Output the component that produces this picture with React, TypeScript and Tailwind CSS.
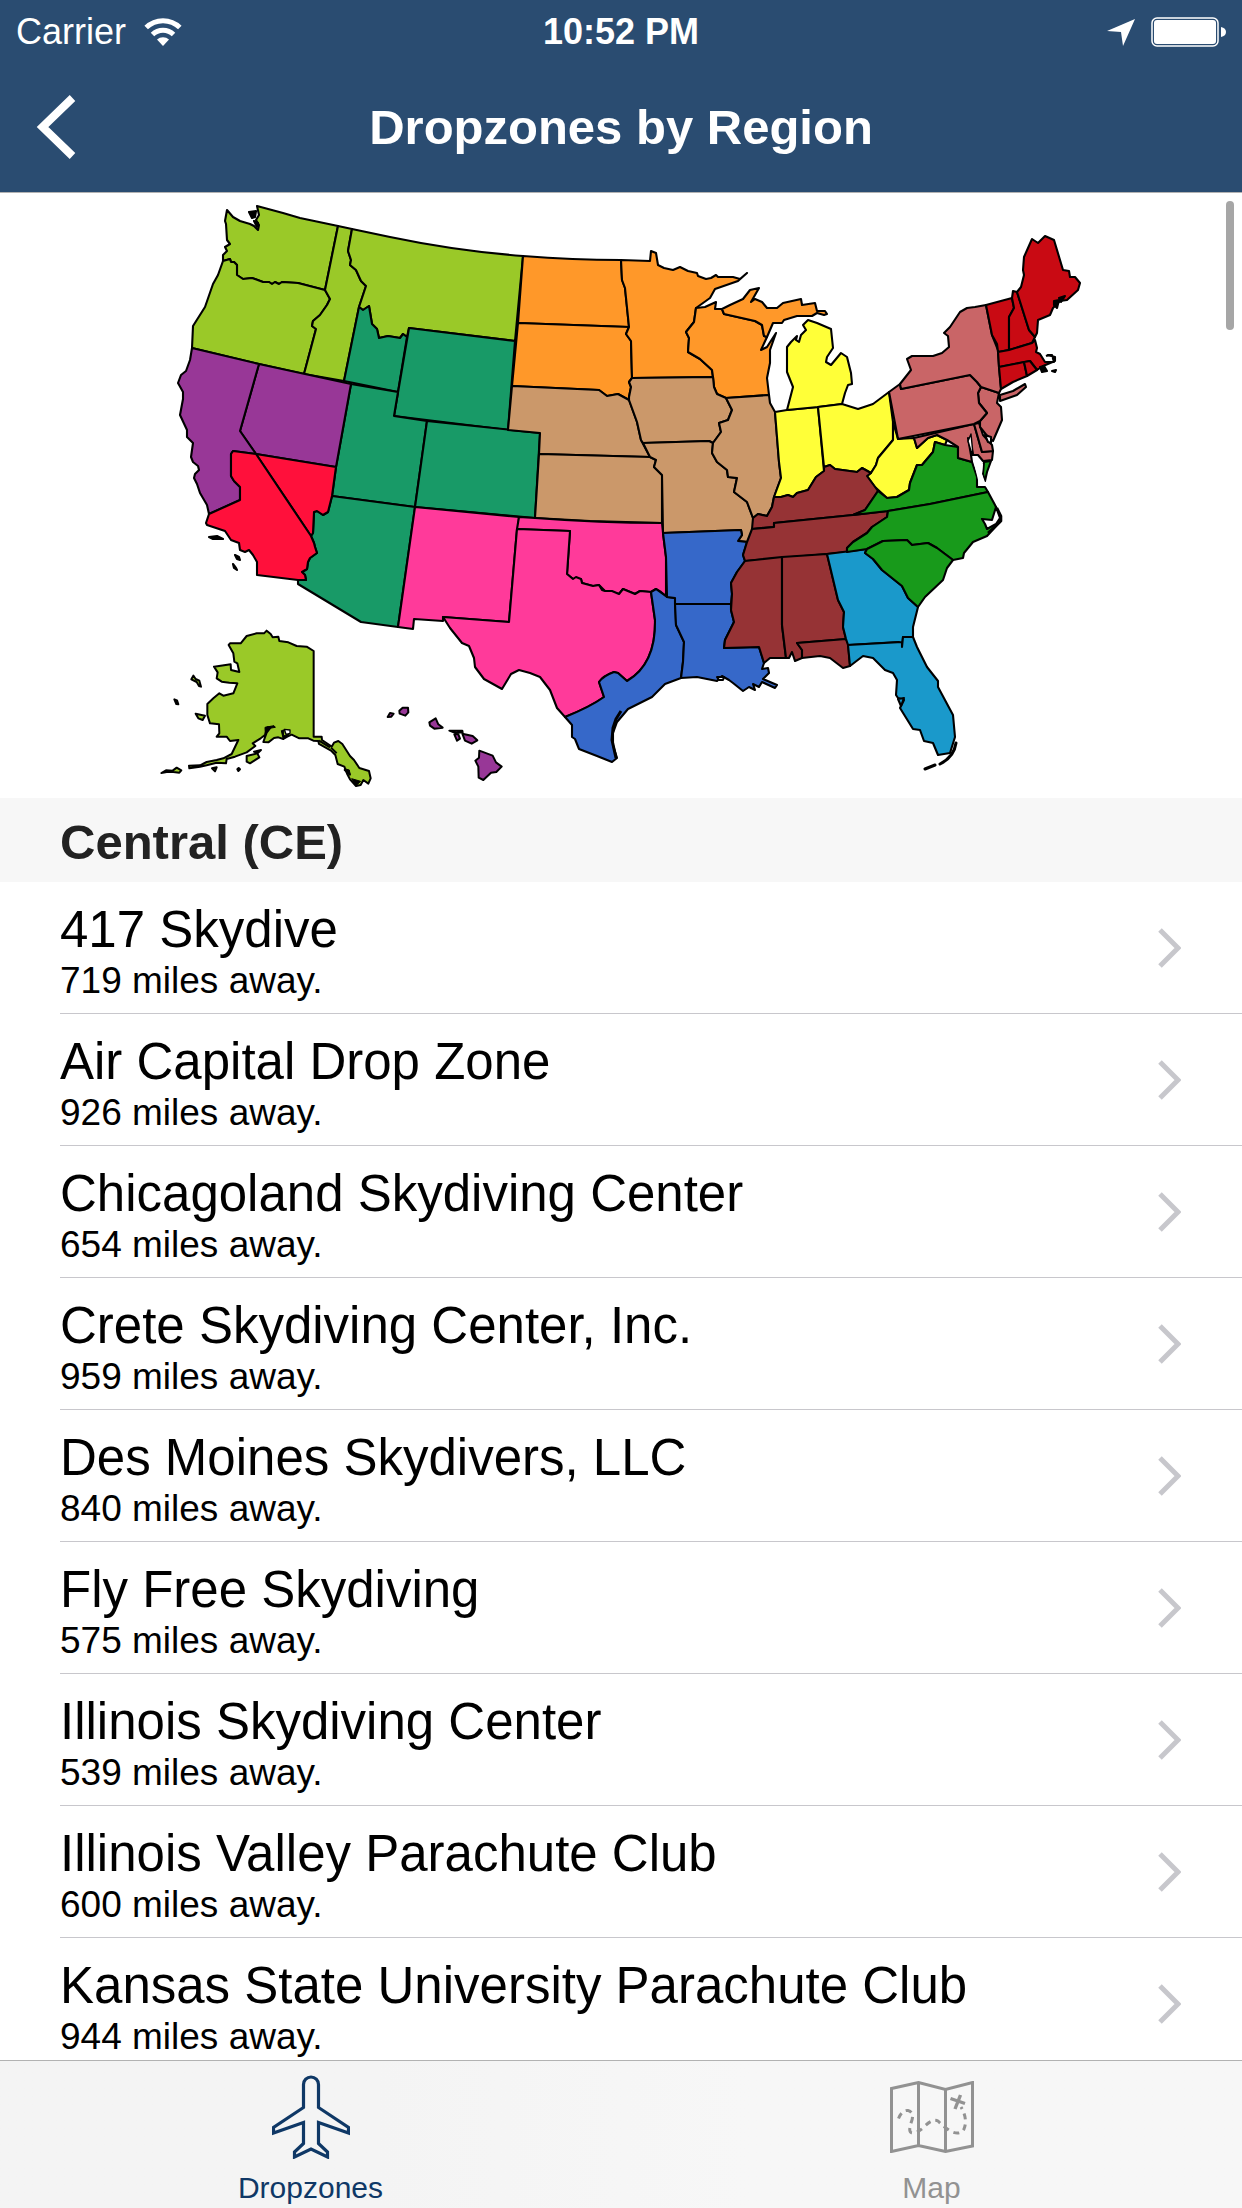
type Region = { name: string; fill: string; states: string[] };

const regions: Region[] = [
  {
    name: "Northwest",
    fill: "#9ac928",
    states: [
      "M227 210L233 217 240 221 250 224 254 226 258 230 259 225 256 220 259 215 257 206 283 213 300 218 338 226 325 290 298 283 282 282 279 284 275 282 272 284 269 282 263 282 252 278 243 279 237 275 237 265 234 262 231 262 230 259 223 261 223 255 227 251 225 247 230 244 227 240 226 224 225 221Z",
      "M223 261L230 259 231 262 234 262 237 265 237 275 243 279 252 278 263 282 269 282 272 284 275 282 279 284 282 282 298 283 325 290 330 299 327 305 320 315 313 321 312 326 316 329 304 374 259 364 192 348 193 326 205 307 213 284 218 275Z",
      "M338 226L352 229 348 251 351 260 350 265 356 270 361 281 366 286 359 307 344 381 304 374 316 329 312 326 313 321 320 315 327 305 330 299 325 290Z",
      "M352 229L390 237Q457 251 523 256L515 341 409 328 407 337 403 334 400 338 388 336 379 338 377 329 372 324 369 306 363 310 359 307 366 286 361 281 356 270 350 265 351 260 348 251Z",
    ],
  },
  {
    name: "Mountain",
    fill: "#189a67",
    states: [
      "M359 307L363 310 369 306 372 324 377 329 379 338 388 336 400 338 403 334 407 337 398 392 344 381Z",
      "M409 328L515 341 508 430 394 416Z",
      "M351 384L398 392 394 416 427 421 415 507 332 496 336 467Z",
      "M427 421L540 433 535 518 415 507Z",
      "M332 496L415 507 398 627 361 622 298 584 298 580 306 580 305 575 302 572 307 569 308 562 310 558 317 553 315 547 314 543 311 536 313 533 314 512 317 511 323 515 328 512Z",
    ],
  },
  {
    name: "North Pacific",
    fill: "#983797",
    states: [
      "M259 364L351 384 336 467 256 454 240 431Z",
      "M192 348L259 364 240 431 256 454 233 451 231 454 231 476 234 481 240 487 240 500 209 514 207 505 200 493 197 484 194 478 195 474 199 470 198 466 193 462 191 457 193 443 187 437 187 430 180 415 183 399 183 392 178 383 181 375 186 371 190 360Z",
    ],
  },
  {
    name: "South Pacific",
    fill: "#ff103b",
    states: [
      "M256 454L336 467 332 496 328 512 323 515 317 511 314 512 313 533 311 536Z",
      "M209 514L240 500 240 487 234 481 231 476 231 454 233 451 256 454 311 536 314 543 315 547 317 553 310 558 308 562 307 569 302 572 305 575 306 580 298 580 257 575 257 562 253 555 249 550 245 552 240 550 239 543 231 540 225 531 216 528 207 525 206 523Z",
    ],
  },
  {
    name: "North Central",
    fill: "#ff9829",
    states: [
      "M523 256Q573 260 621 260L622 280 625 288 629 327 518 323Z",
      "M518 323L629 327 626 334 631 341 632 378 629 382 631 387 629 397 629 400 618 394 607 396 599 390 512 386Z",
      "M621 260L650 261 651 251 656 253 658 265 664 268 673 270 680 267 688 271 697 273 698 276 706 279 711 278 716 275 718 277 733 277 740 279 747 273 738 281 715 289 710 298 696 308 694 322 686 332 689 338 688 352 700 359 712 370 713 377 632 378 631 341 626 334 629 327 625 288 622 280Z",
      "M696 308L705 307 716 302 715 309 722 309 724 314 755 321 762 325 764 336 767 337 761 350 767 347 776 333 770 350 770 363 767 378 769 395 726 398 717 394 714 387 713 377 712 370 700 359 688 352 689 338 686 332 694 322Z",
      "M722 309L730 305 743 299 750 290 759 288 751 302 755 299 762 302 767 308 777 308 783 303 801 299 802 305 815 303 817 311 825 311 827 314 824 315 817 313 812 316 797 316 784 320 782 323 773 323 767 337 764 336 762 325 755 321 724 314Z",
    ],
  },
  {
    name: "Central",
    fill: "#cb986a",
    states: [
      "M512 386L599 390 607 396 618 394 629 400 637 422 641 440 650 457 539 454 540 433 508 430Z",
      "M539 454L650 457 656 460 654 467 662 475 662 523 590 521 535 518Z",
      "M632 378L713 377 714 387 717 394 726 398 732 410 728 420 719 423 721 432 713 443 709 441 643 443 641 440 637 422 629 400 629 397 631 387 629 382Z",
      "M643 443L709 441 713 443 712 453 717 462 727 470 728 477 737 478 734 492 747 502 753 518 755 523 749 542 738 541 742 535 741 530 663 533 662 475 654 467 656 460 650 457Z",
      "M726 398L769 395 770 403 775 412 779 462 781 478 774 497 772 507 767 516 758 514 753 518 747 502 734 492 737 478 728 477 727 470 717 462 712 453 713 443 721 432 719 423 728 420 732 410Z",
    ],
  },
  {
    name: "Mideast",
    fill: "#ffff38",
    states: [
      "M775 412L787 410 818 407 824 471 816 477 808 490 797 493 793 497 788 495 781 497 774 497 781 478 779 462Z",
      "M787 410L818 407 842 404 845 393 848 385 852 384 851 373 847 357 841 353 831 365 826 362 827 357 833 348 831 329 817 323 808 320 803 325 806 330 801 335 799 342 796 340 797 336 791 342 787 347 787 372 793 387Z",
      "M818 407L842 404 858 409 873 404 889 392 893 422 893 440 878 458 876 465 871 473 862 468 857 472 835 469 830 465 824 467Z",
      "M893 422L898 439 914 438 917 448 928 438 937 435 947 440 945 445 935 442 933 452 922 465 917 465 910 483 909 490 897 497 887 498 875 487 867 476 871 473 876 465 878 458 893 440Z",
    ],
  },
  {
    name: "Southwest",
    fill: "#ff3a9a",
    states: [
      "M415 507L519 517 518 529 517 529 509 622 443 617 443 621 414 619 413 629 398 627Z",
      "M519 517L535 518Q600 523 662 523L663 533 666 557 666 596 661 592 656 589 651 592 640 591 635 594 623 589 619 594 605 591 599 585 593 586 582 583 581 579 573 579 567 574 570 531 517 529Z",
      "M517 529L570 531 567 574 573 579 576 577 581 579 582 583 593 586 599 585 602 590 605 591 612 591 619 594 623 589 635 594 640 591 651 592 655 620Q656 664 627 681L618 673 614 672Q603 676 599 682L604 697Q590 707 565 717L557 708 550 690 540 677 530 673 519 670 511 674 502 689 484 679 475 667 474 658 469 646 462 643 450 628 443 617 509 622Z",
    ],
  },
  {
    name: "Gulf",
    fill: "#3668c9",
    states: [
      "M651 592L656 589 667 597 675 598 676 625 684 642 683 662 681 678 665 684 652 697 628 709 617 722 613 733 613 745 617 758 612 762 597 756 579 749 575 739 572 737 572 725 565 717Q590 707 604 697L599 682Q603 676 614 672L618 673 627 681Q656 664 655 620Z",
      "M675 604L731 604 731 610 734 622 725 640 724 648 759 647 764 663 762 669 768 668 769 673 763 679 777 685 775 688 762 682 759 687 753 684 755 690 749 687 743 691 733 683 729 680 722 676 717 681 697 677 681 678 683 662 684 642 676 625Z",
      "M663 533L741 530 742 535 738 541 747 542 743 555 745 561 737 572 731 583 732 594 731 604 675 604 675 598 667 597 666 557Z",
    ],
  },
  {
    name: "Southern",
    fill: "#963335",
    states: [
      "M774 497L781 497 788 495 793 497 797 493 808 490 816 477 824 471 824 467 830 465 835 469 857 472 862 468 871 473 867 476 878 491 865 510 853 515 774 523 774 527 752 529 753 518 758 514 767 516 772 507Z",
      "M752 529L774 527 774 523 853 515 888 511 887 517 872 527 867 533 853 542 847 548 847 552 827 554 745 561 743 555 747 542Z",
      "M745 561L782 557 782 625 786 658 770 658 764 663 759 647 724 648 725 640 734 622 731 610 732 594 731 583 737 572Z",
      "M782 557L827 554 838 600 844 612 843 627 846 639 797 643 802 650 802 658 795 661 792 652 789 658 786 658 782 625Z",
      "M797 643L846 639 848 643 850 666 843 668 830 658 820 656 802 658 802 650Z",
    ],
  },
  {
    name: "Southeast",
    fill: "#1a99cb",
    states: [
      "M827 554L867 549 865 553 873 559 882 570 902 586 908 598 918 607 913 627 913 637 903 637 902 647 899 642 848 645 846 639 843 627 844 612 838 600Z",
      "M848 645L902 642 902 647 903 637 913 637 917 647 927 667 938 681 938 687 953 715 955 737 950 753 938 755 933 743 924 741 920 730 913 729 900 708 904 700 898 698 896 695 897 680 893 673 885 670 873 658 863 656 850 666Z",
    ],
  },
  {
    name: "Mid-Atlantic South",
    fill: "#189a1b",
    states: [
      "M853 515L865 510 878 491 887 498 897 497 909 490 910 483 917 465 922 465 933 452 935 442 945 445 958 447 958 458 972 462 977 477 977 487 985 487 988 492 930 504 888 511Z",
      "M888 511L930 504 988 492 995 505 1001 517 1000 522 987 536 973 542 964 553 963 558 953 560 937 548 928 543 912 545 907 540 883 541 867 549 847 552 847 548 853 542 867 533 872 527 887 517Z",
      "M867 549L883 541 907 540 912 545 928 543 937 548 953 560 947 568 943 580 925 597 918 607 908 598 902 586 882 570 873 559 865 553Z",
      "M984 462L991 461 987 472 985 481 983 474Z",
    ],
  },
  {
    name: "Eastern",
    fill: "#c96567",
    states: [
      "M914 438L974 424 982 452 993 451 992 460 983 461 978 455 973 455 970 440 968 438 971 455 972 462 958 458 958 447 947 440 937 435 928 438 917 448Z",
      "M974 424L979 423 983 435 992 445 993 451 982 452Z",
      "M981 387L999 393 997 403 1001 407 1002 420 993 441 988 437 980 427 980 421 987 413 979 403 978 393Z",
      "M889 392L900 384 901 389 970 375 977 382 981 387 978 393 979 403 987 413 980 421 974 424 898 439Z",
      "M900 384L911 370 907 359 912 356 933 356 942 353 949 347 948 336 944 333 950 327 960 312 967 308 975 307 986 305 992 335 998 350 999 367 1001 389 999 393 981 387 977 382 970 375 901 389Z",
      "M1000 395L1013 391 1025 384 1026 387 1017 395 1000 401Z",
    ],
  },
  {
    name: "Northeast",
    fill: "#c90a13",
    states: [
      "M986 305L1012 298 1014 308 1009 317 1009 350 998 352 997 344 992 335Z",
      "M1012 298L1013 291 1017 292 1029 330 1035 337 1032 343 1009 350 1009 317 1014 308Z",
      "M1017 292L1021 287 1024 275 1023 270 1024 257 1032 239 1038 243 1045 236 1054 240 1063 270 1069 271 1070 277 1075 277 1080 283 1078 290 1067 300 1060 301 1053 308 1050 315 1038 320 1037 333 1035 337 1029 330Z",
      "M998 352L1009 350 1032 343 1035 340 1037 348 1036 352 1040 354 1045 362 1054 362 1052 355 1048 355 1055 357 1055 361 1043 366 1037 370 1030 361 999 367Z",
      "M999 367L1024 362 1027 376 1013 382 1001 389Z",
      "M1024 362L1030 361 1037 370 1027 376Z",
    ],
  },
];

const alaska = [
  "M350 62L362 72 368 82 385 80 388 93 415 97 440 108 470 110 491 123 491 380 515 380 516 390 545 410 552 398 565 393 577 402 600 438 612 450 628 474 657 483 662 505 655 521 640 510 632 525 618 528 600 508 592 493 583 470 563 462 556 435 543 422 507 402 505 393 490 392 475 385 448 385 425 374 412 380 400 387 385 382 372 384 355 397 340 396 350 368 362 352 352 352 345 375 332 385 308 400 316 408 290 427 255 440 230 447 228 460 200 458 170 466 150 470 118 475 117 467 150 466 170 456 200 450 220 445 245 432 265 390 240 393 230 380 200 380 208 370 207 343 180 340 172 315 172 282 190 265 208 250 220 257 250 250 262 220 238 218 215 215 200 205 203 187 192 170 242 163 243 180 268 186 262 160 253 155 250 130 236 105 240 100 272 100 290 78 320 70 342 70Z",
  "M290 438L322 430 328 442 300 460 290 455Z",
  "M124 208L130 197 137 207 148 212 153 230 147 228 140 216Z",
  "M137 311L165 317 158 330 145 325Z",
  "M73 268L81 271 85 283 79 282Z",
  "M34 489L48 481 68 482 80 473 94 481 88 488 70 486 50 486Z",
  "M262 478L266 474 270 478 265 483Z",
  "M186 475L200 472 195 484Z",
  "M312 425L333 420 325 428Z",
  "M584 480L597 487 600 494Z",
];

const hawaii = [
  "M713 321L720 309 731 311 724 320Z",
  "M748 302L758 293 774 293 775 307 766 317 749 311Z",
  "M838 337L857 325 865 343 878 353 853 356 840 347Z",
  "M898 362L937 362 938 367 917 369Z",
  "M913 373L925 373 930 386 921 392Z",
  "M937 371L968 378 982 391 965 401 945 392Z",
  "M988 422L1028 437 1038 457 1055 470 1039 486 1023 488 1000 510 986 503 985 470 976 452 987 443Z",
];

function RegionMap() {
  return (
    <svg viewBox="0 193 1242 605" className="block h-auto w-full" role="img" aria-label="Map of regions">
      <g stroke="#000" strokeWidth="2.1" strokeLinejoin="round">
        {regions.map((r) => (
          <g key={r.name} fill={r.fill}>
            {r.states.map((d) => (
              <path key={d} d={d} />
            ))}
          </g>
        ))}
        {/* bays, sounds and small islands */}
        <path fill="#fff" d="M982 519L992 520 996 507 1000 518 996 524 987 529 985 524Z" />
        <path fill="#fff" stroke="none" d="M974 463L983 464 982 474 986 485 979 484Z" />
        <path fill="#fff" strokeWidth="1.4" d="M971 434L968 441 971 451 973 454 972 444Z" />
        <path fill="#fff" d="M985 435L991 437 991 443 988 442Z" />
        <path fill="#fff" d="M717 677L724 677 723 680 719 680Z" />
        <path fill="#1a99cb" d="M898 699L904 698 901 706Z" />
        <path d="M249 212L256 211 255 217 252 218ZM254 221L258 223 257 227ZM209 537L217 536 223 539 213 539ZM235 555L239 557 240 560 237 559ZM233 564L236 568 237 570 234 568Z" />
        <path d="M1054 301L1059 300 1057 308 1054 305ZM1059 298L1065 296 1061 302ZM1040 367L1044 366 1047 371 1042 372ZM1052 371L1056 370 1055 372Z" />
        <path fill="none" d="M1046 356Q1053 353 1054 360" />
        <path fill="none" d="M621 711L616 719 613 728 612 740 616 758" strokeWidth="3" />
        <path fill="none" d="M997 508L1001 516V521L988 533" strokeWidth="2.600" />
        <path fill="none" d="M956 743Q954 757 940 764M935 765L925 769" strokeWidth="3" strokeLinecap="round" />
      </g>
      <g transform="translate(150 610) scale(.33333)" stroke="#000" strokeWidth="6" strokeLinejoin="round">
        <g fill="#9ac928">
          {alaska.map((d) => (
            <path key={d} d={d} />
          ))}
        </g>
        <path strokeWidth="3" d="M345 352L372 347 376 352 358 355 346 372ZM394 362L402 360 400 378 418 372 400 389ZM583 476L600 492 598 480ZM605 506L632 514 618 527Z" />
        <path fill="#fff" strokeWidth="4" d="M403 358L420 360 420 370 408 373Z" />
        <path fill="none" d="M507 392L540 412M543 413L560 430" />
        <g fill="#983797">
          {hawaii.map((d) => (
            <path key={d} d={d} />
          ))}
        </g>
      </g>
    </svg>
  );
}

function WifiIcon() {
  return (
    <svg viewBox="0 0 38 28" className="h-7 w-[38px]" fill="none" stroke="#fff" strokeWidth="5" aria-hidden="true">
      <path d="M2.2 9.5A24 24 0 0 1 35.800 9.500" />
      <path d="M8.500 16.500A15 15 0 0 1 29.500 16.500" />
      <path d="M13 21.500A9 9 0 0 1 25 21.500L19 28Z" fill="#fff" stroke="none" />
    </svg>
  );
}

function PlaneIcon() {
  return (
    <svg viewBox="0 0 78 84" className="h-[84px] w-[78px]" fill="none" stroke="currentColor" strokeWidth="3.200" aria-hidden="true">
      <path d="M31.500 32.500V9.500a7.500 7.500 0 0 1 15 0V32.500L76.500 52.500V58L46.500 47.500V68.500L55.500 77V82L39 74 22.500 82V77L31.500 68.500V47.500L1.500 58V52.500Z" />
    </svg>
  );
}

function TrailMapIcon() {
  return (
    <svg viewBox="0 0 84 72" className="h-[72px] w-[84px]" fill="none" stroke="currentColor" strokeWidth="3" aria-hidden="true">
      <path d="M1.500 7.500L28.500 1.500 55.500 8.500 82.500 1.500V65L55.500 70.500 28.500 64.500 1.500 70.500ZM28.500 1.500V64.500M55.500 8.500V70.500" />
      <path
        d="M8.500 37.500Q12 29 18 29.500Q24 31 22 39Q18 50 21 51.500Q26 53 33 47Q42 37 48 40Q53 45 60 50Q70 55 74 48Q78 38 71 26"
        strokeDasharray="6 5"
      />
      <path d="M60.500 17.500L75 22.500M70.500 14L65 28" strokeWidth="3.400" />
    </svg>
  );
}

const dropzones = [
  { name: "417 Skydive", miles: 719 },
  { name: "Air Capital Drop Zone", miles: 926 },
  { name: "Chicagoland Skydiving Center", miles: 654 },
  { name: "Crete Skydiving Center, Inc.", miles: 959 },
  { name: "Des Moines Skydivers, LLC", miles: 840 },
  { name: "Fly Free Skydiving", miles: 575 },
  { name: "Illinois Skydiving Center", miles: 539 },
  { name: "Illinois Valley Parachute Club", miles: 600 },
  { name: "Kansas State University Parachute Club", miles: 944 },
];

function StatusBar() {
  return (
    <div className="grid h-16 grid-cols-3 items-center px-4 text-[36px] leading-[64px]">
      <div className="flex items-center gap-[18px]">
        <span>Carrier</span>
        <WifiIcon />
      </div>
      <span className="text-center font-bold">10:52 PM</span>
      <div className="flex items-center justify-end gap-4">
        <svg viewBox="0 0 28 27" className="h-[27px] w-7" fill="#fff" aria-hidden="true">
          <path d="M28 0L16 27 14 13 0 12Z" />
        </svg>
        <svg viewBox="0 0 75 30" className="h-[30px] w-[75px]" aria-hidden="true">
          <rect x="1" y="1" width="66" height="28" rx="5" fill="none" stroke="#fff" strokeWidth="1.500" />
          <rect x="3" y="3" width="62" height="24" rx="3" fill="#fff" />
          <path d="M70 10Q75 11 75 15Q75 19 70 20Z" fill="#fff" />
        </svg>
      </div>
    </div>
  );
}

export default function App() {
  return (
    <div className="flex h-screen flex-col bg-white font-['Liberation_Sans',Arial,sans-serif] text-black">
      <header className="shrink-0 border-b border-[#b2b2b2] bg-[#2a4c71] text-white">
        <StatusBar />
        <div className="grid h-32 grid-cols-[120px_1fr_120px] items-start">
          <button type="button" aria-label="Back" className="flex h-[126px] items-center pl-9">
            <svg viewBox="0 0 40 64" className="h-16 w-10" fill="none" stroke="#fff" strokeWidth="8" aria-hidden="true">
              <path d="M36.500 3L6.500 32 36.500 61" />
            </svg>
          </button>
          <h1 className="text-center text-[49px] leading-[126px] font-bold">Dropzones by Region</h1>
        </div>
      </header>

      <div className="relative min-h-0 flex-1">
        <main className="h-full overflow-y-auto [scrollbar-width:none]">
          <RegionMap />
          <h2 className="bg-[#f7f7f7] pt-[14px] pb-[10px] pl-[60px] text-[49px] leading-[60px] font-bold text-[#222]">
            Central (CE)
          </h2>
          <ul className="pl-[60px]">
            {dropzones.map((dz) => (
              <li key={dz.name}>
                <a href="#" className="flex items-center justify-between border-b border-[#c8c7cc] pr-[61px]">
                  <span className="pt-5 pb-[9px]">
                    <span className="block text-[51px] leading-[56px]">{dz.name}</span>
                    <span className="block text-[37px] leading-[46px]">{dz.miles} miles away.</span>
                  </span>
                  <svg viewBox="0 0 24 40" className="h-10 w-6 shrink-0" fill="none" stroke="#c7c7cc" strokeWidth="5" aria-hidden="true">
                    <path d="M3 2L21 20 3 38" />
                  </svg>
                </a>
              </li>
            ))}
          </ul>
        </main>
        <div className="absolute top-2 right-2 h-[129px] w-2 rounded-full bg-[#a6a6a6]" />
      </div>

      <nav className="grid h-[148px] shrink-0 grid-cols-2 border-t border-[#b2b2b2] bg-linear-to-r from-[#f4f4f4] from-30% to-[#f7f7f7] to-60% text-[30px] leading-[34px]">
        <button type="button" className="flex flex-col items-center justify-between pt-[14px] pb-[3px] text-[#0f3866]">
          <PlaneIcon />
          <span>Dropzones</span>
        </button>
        <button type="button" className="flex flex-col items-center justify-between pt-5 pb-[3px] text-[#929292]">
          <TrailMapIcon />
          <span>Map</span>
        </button>
      </nav>
    </div>
  );
}
